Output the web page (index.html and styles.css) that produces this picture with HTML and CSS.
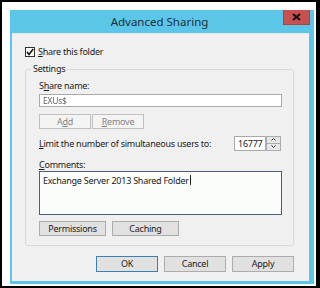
FILE: index.html
```html
<!DOCTYPE html>
<html>
<head>
<meta charset="utf-8">
<link rel="stylesheet" href="styles.css">
</head>
<body>
<div class="screen">
  <div class="window">
    <div class="titlebar">
      <span class="title">Advanced Sharing</span>
      <div class="close">
        <svg width="9" height="8" viewBox="0 0 9 8"><path d="M1 1 L8 7 M8 1 L1 7" stroke="#111" stroke-width="2" fill="none"/></svg>
      </div>
    </div>
    <div class="client">
      <div class="check-row">
        <span class="checkbox">
          <svg width="8" height="8" viewBox="0 0 8 8"><path d="M1 4 L3 6.5 L7.2 1" stroke="#111" stroke-width="1.6" fill="none"/></svg>
        </span>
        <span><u>S</u>hare this folder</span>
      </div>
      <div class="group">
        <span class="legend">Settings</span>
        <div class="label">S<u>h</u>are name:</div>
        <div class="input"><span class="blurred">EXUs$</span></div>
        <div class="btn-row">
          <button class="btn disabled">A<u>d</u>d</button>
          <button class="btn disabled"><u>R</u>emove</button>
        </div>
        <div class="limit-row">
          <span><u>L</u>imit the number of simultaneous users to:</span>
          <div class="spinner">
            <div class="spin-val">16777</div>
            <div class="spin-btns">
              <span class="spin-btn"><svg width="5" height="3" viewBox="0 0 5 3"><path d="M0.5 2.5 L2.5 0.5 L4.5 2.5" stroke="#333" fill="none"/></svg></span>
              <span class="spin-btn"><svg width="5" height="3" viewBox="0 0 5 3"><path d="M0.5 0.5 L2.5 2.5 L4.5 0.5" stroke="#333" fill="none"/></svg></span>
            </div>
          </div>
        </div>
        <div class="label comments"><u>C</u>omments:</div>
        <div class="textarea">Exchange Server 2013 Shared Folder<span class="caret"></span></div>
        <div class="btn-row lower">
          <button class="btn wide">Permissions</button>
          <button class="btn wide">Caching</button>
        </div>
      </div>
      <div class="footer">
        <button class="btn foot default">OK</button>
        <button class="btn foot">Cancel</button>
        <button class="btn foot">Apply</button>
      </div>
    </div>
  </div>
</div>
</body>
</html>
```
FILE: styles.css
```css
* { box-sizing: border-box; }
html, body { margin: 0; padding: 0; }
body { width: 320px; height: 288px; overflow: hidden; background: #fff; }

.screen {
  width: 320px; height: 288px;
  border-style: solid; border-color: #000;
  border-width: 2px 4px 2px 2px;
  padding: 8px 2px 2px 8px;
  background: #fff;
  font-family: "Noto Sans", "Open Sans", sans-serif;
  font-size: 9px;
  letter-spacing: -0.25px;
  color: #1a1a1a;
}

.window {
  width: 304px; height: 274px;
  background: #5cc6e8;
  padding: 0 5px 3px 2px;
  display: flex; flex-direction: column;
}

.titlebar {
  height: 23px;
  display: flex;
  align-items: flex-start;
}
.title {
  flex: 1;
  text-align: center;
  font-size: 11.5px;
  letter-spacing: 0;
  line-height: 23px;
  color: #1d2f3a;
  padding-left: 24px;
}
.close {
  width: 27px; height: 15px;
  background: #c75050;
  border: 1px solid #a84444;
  border-top: none;
  display: flex; align-items: center; justify-content: center;
  margin-right: -1px;
}

.client {
  flex: 1;
  background: #f0f0f0;
  border-top: 1px solid #e6e6e6;
  padding: 11px 15px 0 13px;
}

.check-row {
  display: flex; align-items: center;
  height: 11px;
  margin-top: 1px;
}
.checkbox {
  width: 10px; height: 10px;
  border: 1px solid #333;
  background: #fff;
  display: flex; align-items: center; justify-content: center;
  margin-right: 3px;
}

.group {
  position: relative;
  margin-top: 12px;
  width: 269px;
  border: 1px solid #d9d9d9;
  border-radius: 3px;
  padding: 10px 12px 9px 13px;
}
.legend {
  position: absolute;
  top: -7px; left: 5px;
  padding: 0 2px;
  background: #f0f0f0;
  line-height: 12px;
}

.label { line-height: 12px; height: 12px; }
.label.comments { margin-top: 8px; }

.input {
  margin-top: 2px;
  width: 243px; height: 13px;
  border: 1px solid #a9a9a9;
  background: #fff;
  padding-left: 3px;
  line-height: 11px;
  font-size: 8.5px;
  color: #666;
}
.blurred { filter: blur(0.6px); }

.btn-row { display: flex; gap: 1px; margin-top: 7px; }
.btn-row.lower { margin-top: 6px; gap: 6px; }

.btn {
  font: inherit;
  letter-spacing: inherit;
  color: #1a1a1a;
  height: 15px;
  padding: 0;
  margin: 0;
  background: #e1e1e1;
  border: 1px solid #acacac;
  line-height: 13px;
  text-align: center;
}
.btn.disabled {
  width: 52px;
  background: #f4f4f4;
  border-color: #bfbfbf;
  color: #838383;
}
.btn.wide { width: 67px; }

.limit-row {
  margin-top: 7px;
  display: flex; align-items: center;
  justify-content: space-between;
  height: 15px;
}
.spinner { display: flex; height: 15px; }
.spin-val {
  width: 32px; height: 15px;
  border: 1px solid #a9a9a9;
  background: #fff;
  padding-left: 3px;
  line-height: 13px;
  overflow: hidden;
  white-space: nowrap;
}
.spin-btns { display: flex; flex-direction: column; width: 15px; }
.spin-btn {
  height: 7.5px;
  border: 1px solid #acacac;
  background: #e6e6e6;
  display: flex; align-items: center; justify-content: center;
}
.spin-btn + .spin-btn { border-top: none; }

.textarea {
  width: 243px; height: 44px;
  border: 1px solid #4c5d80;
  background: #fafdf9;
  padding: 3px 3px;
  line-height: 12px;
}
.caret {
  display: inline-block;
  width: 1px; height: 10px;
  background: #222;
  vertical-align: -1px;
  margin-left: 1px;
}

.footer {
  margin-top: 10px;
  display: flex; justify-content: flex-end; gap: 6px;
}
.btn.foot { width: 62px; height: 16px; line-height: 14px; }
.btn.default { border-color: #3c7fb1; }
```
